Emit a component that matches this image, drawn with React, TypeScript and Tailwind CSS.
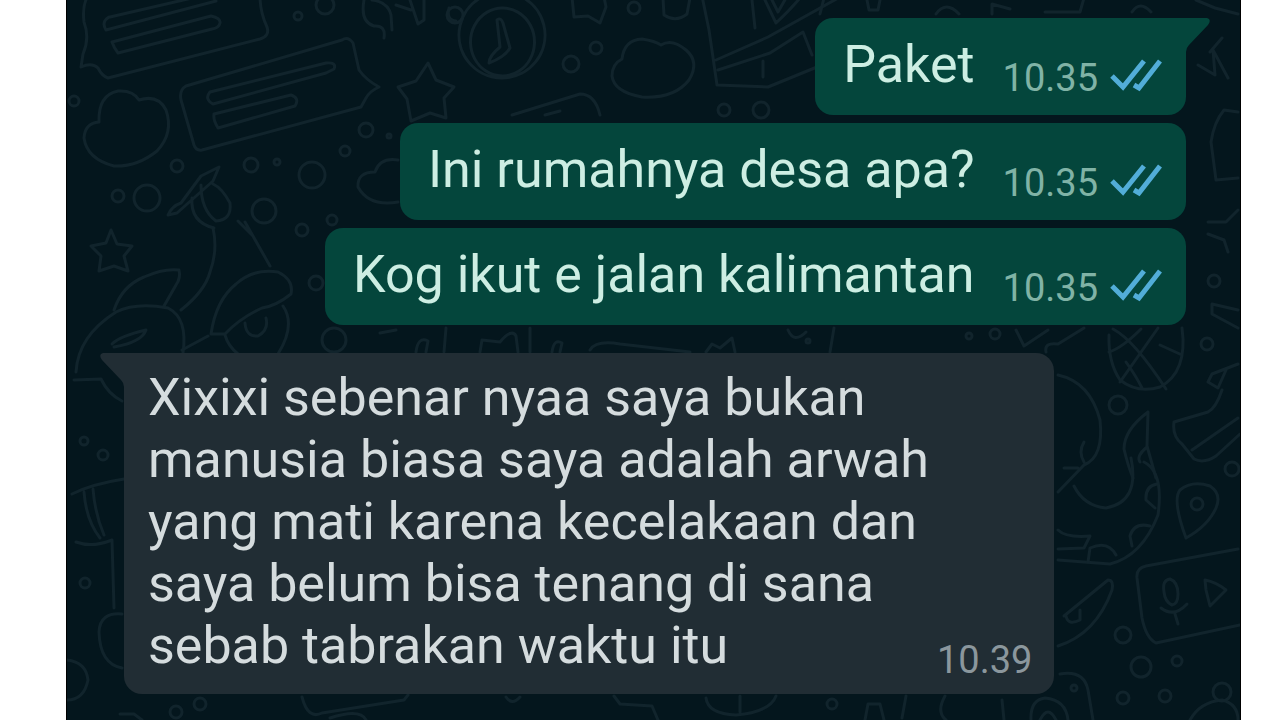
type Outgoing = { text: string; time: string; tail?: boolean };

const outgoing: Outgoing[] = [
  { text: "Paket", time: "10.35", tail: true },
  { text: "Ini rumahnya desa apa?", time: "10.35" },
  { text: "Kog ikut e jalan kalimantan", time: "10.35" },
];

const incomingLines = [
  "Xixixi sebenar nyaa saya bukan",
  "manusia biasa saya adalah arwah",
  "yang mati karena kecelakaan dan",
  "saya belum bisa tenang di sana",
  "sebab tabrakan waktu itu",
];

const doodles = [
  // chat bubbles, top left
  "M88 -4 Q82 5 84 22 Q90 38 83 54 L81 67 Q92 62 98 68 Q102 76 108 78 L260 39 Q270 36 267 27 Q260 12 260 -4",
  "M110 17 L218 -8 M106 30 L216 1 M109 17 Q101 22 106 30 M112 42 L211 16 Q221 18 220 23 Q219 28 212 29 L118 53 Q114 48 112 42",
  "M186 86 L342 40 Q348 36 353 43 L359 70 Q366 80 379 87 Q370 91 366 98 L361 107 L202 150 Q196 151 194 145 L181 100 Q179 90 186 86",
  "M210 92 L326 63 Q337 62 334 69 L326 73 L213 104 Q204 99 210 92 M214 114 L291 95 Q300 98 295 106 L218 128 Q213 120 214 114",
  // clouds
  "M99 122 Q98 95 118 91 Q133 90 139 100 Q158 94 166 110 Q174 133 157 151 Q137 167 114 166 Q87 159 84 138 Q85 123 99 122",
  "M622 59 Q624 40 642 39 Q655 41 661 45 Q672 38 686 50 Q700 62 689 80 Q674 99 642 97 Q614 92 612 76 Q612 64 622 59",
  "M398 160 Q380 157 375 172 Q357 172 358 187 Q369 207 398 202",
  // stars
  "M428 63 L436 80 L454 87 L444 98 L446 118 L430 113 L411 121 L407 99 L398 87 L416 81 Z",
  "M111 230 L117 244 L132 246 L124 256 L128 271 L114 266 L99 271 L101 256 L91 246 L106 243 Z",
  "M572 -3 L574 17 L588 16 L600 23 L606 7 L604 -3",
  // clock
  "M520 -4 A43 43 0 1 1 484 -4 M502 8 A32 34 0 1 0 503 8",
  "M497 20 Q501 17 503 23 L510 48 Q505 57 489 63 Q489 56 500 47 Z",
  // phone and ship
  "M702 -4 L709 30 L717 85 L768 87 L817 67 M716 60 L768 37 L840 -3 M718 70 L770 53 L803 32 L812 55 M763 61 L763 77",
  "M663 -2 L664 15 Q676 23 687 14 L690 -2 M752 0 L755 28 M764 -2 L776 23 Q790 10 800 -2 M772 0 L778 12 L786 -2",
  "M512 115 L580 94 Q595 94 600 115 M545 115 L560 111",
  // top marks
  "M364 0 Q360 22 374 26 Q386 25 384 38 M372 0 Q388 2 391 15 L392 30 M396 5 L411 10 M410 0 L418 24 L424 20 L424 -2 M449 8 Q446 20 456 21",
  "M820 14 L824 -2 M867 0 L869 10 L878 10 L880 0 M936 14 Q946 0 959 14 M992 14 L992 4 L1010 9 M1045 12 L1080 12 L1084 -2 M1132 12 Q1140 0 1151 12",
  "M1196 0 L1215 8 L1238 14 M1198 65 L1215 75 L1213 50 L1228 78 M1222 38 L1210 52 M1238 112 L1224 110 Q1214 122 1211 142 L1216 180 L1238 178 M1238 210 L1226 222 L1208 222 M1208 234 L1224 240 L1228 252",
  // flower and fruit, left
  "M168 215 Q172 206 181 203 L201 176 L219 167 L213 181 L177 213 Z M192 198 Q190 222 214 228 M201 185 Q201 210 216 221 Q232 220 230 203 Q222 188 213 184",
  "M213 228 Q218 250 210 272 Q205 291 181 310 M238 221 L253 236 M245 222 L270 266",
  "M114 310 Q122 286 144 277 Q164 268 179 270 Q181 278 176 285 L164 306",
  "M76 372 Q78 336 116 312 Q136 302 168 308 Q188 318 183 353 M74 380 L101 379 Q108 394 122 401",
  "M112 344 Q120 336 146 330 Q142 342 114 347",
  "M211 334 Q216 300 236 284 Q254 268 278 272 Q294 280 291 294 Q276 306 262 308 Q240 318 225 334 L211 334 M182 350 L208 336 M225 335 Q228 346 238 354 M283 306 Q296 325 278 354",
  "M245 323 Q246 337 258 336 Q269 330 266 318",
  // ball and gourd, right
  "M1109 335 Q1108 362 1120 380 Q1138 394 1160 387 Q1188 372 1182 328 M1113 329 Q1134 340 1166 389 M1109 352 Q1122 348 1141 329 M1120 382 L1158 328 M1126 362 Q1136 376 1142 388 M1160 345 L1182 355",
  "M1016 330 L1024 346 L1048 330 M1046 352 Q1044 342 1058 344 L1084 328",
  "M1058 375 Q1090 382 1100 420 Q1104 457 1084 465 L1058 492 M1084 442 Q1078 452 1084 462 M1064 468 L1078 468",
  "M1148 412 Q1124 430 1124 449 Q1128 466 1133 478 M1148 412 L1147 446 L1156 478 M1147 447 Q1136 456 1140 462",
  "M1131 458 Q1140 502 1106 508 Q1084 506 1074 486 M1144 462 Q1164 472 1158 515 Q1142 556 1110 564 L1058 560",
  "M1157 484 Q1145 486 1146 500 L1155 508 M1150 526 Q1134 522 1130 536 L1132 546 M1116 555 Q1108 540 1090 548 L1088 562 M1058 530 Q1066 538 1090 536 L1084 548 L1058 549",
  // boot, pin and voice card, right
  "M1238 364 L1212 374 L1208 382 L1218 388 L1226 370 M1222 390 Q1216 408 1208 412 L1174 422 Q1172 436 1182 444 L1194 459 Q1204 464 1216 456 L1240 434 M1192 450 L1238 418",
  "M1238 310 L1212 304 L1212 314 L1238 328",
  "M1186 538 Q1172 500 1180 490 Q1192 480 1210 486 Q1222 494 1216 508 Q1208 526 1186 538",
  "M1238 549 L1146 566 Q1136 568 1137 578 L1142 618 Q1146 638 1156 643 L1240 625",
  "M1164 592 Q1162 580 1170 579 Q1178 582 1178 594 Q1178 604 1172 605 Q1165 602 1164 592 M1161 608 Q1174 618 1187 604 M1175 614 L1178 624",
  "M1205 580 L1206 590 L1210 606 L1226 590 Q1216 582 1205 580",
  "M1064 616 L1108 580 Q1114 580 1112 590 Q1096 634 1058 646 M1066 616 Q1068 626 1080 620 L1080 610",
  // shapes below the bubbles
  "M1060 674 Q1084 670 1088 690 L1093 720 M1031 720 Q1030 700 1045 698 Q1066 700 1068 720 M1040 720 Q1048 704 1056 720 M1190 720 Q1200 702 1222 700 Q1238 704 1238 720",
  "M302 697 Q308 720 322 713 L404 700 L408 695 M330 718 Q360 708 366 720 M706 698 Q708 714 736 715 Q770 712 776 696 M740 696 L740 712 M614 696 L620 704 L652 706 L658 720 M506 697 Q512 706 520 697",
  "M865 720 L868 704 L880 704 L884 720 M906 696 L902 718 M945 696 Q936 712 946 720 M1002 700 L1004 720 M120 714 L134 714 L142 720",
  // jar, bottom left
  "M72 494 Q92 484 124 479 M84 492 Q86 520 100 538 M93 489 Q95 514 104 535 M76 542 Q92 548 112 540 M112 540 L114 608 M122 614 Q100 612 99 632 Q100 664 122 668 M67 660 Q86 662 88 680 Q84 700 67 700",
  // strip between the bubbles
  "M380 333 L396 330 M416 352 Q418 336 428 341 L426 352 M446 328 L444 352 M480 352 L482 340 L500 342 Q512 328 516 336 L518 352 M530 328 L530 352 M552 352 Q554 338 562 343 L560 352 M590 350 Q596 340 620 344 L690 352 M706 352 L712 344 L720 348 L732 338 L735 352 M788 330 Q794 344 806 332 M834 328 L830 352",
];

// cx, cy, r
const rings = [
  [147, 198, 13], [264, 211, 12], [312, 175, 13], [177, 166, 6], [118, 196, 6],
  [251, 165, 7], [302, 230, 6], [332, 220, 5], [366, 130, 7], [345, 151, 5],
  [325, 5, 9], [571, 64, 8], [596, 48, 6], [634, 8, 6], [455, 15, 8],
  [724, 110, 6], [761, 110, 8], [334, 340, 12], [316, 283, 7], [1118, 405, 9],
  [1214, 281, 6], [1207, 344, 6], [1197, 504, 6], [1232, 469, 7], [1123, 635, 8],
  [1141, 667, 10], [1177, 661, 5], [1123, 698, 6], [1165, 696, 6], [1222, 692, 9],
  [1074, 688, 3], [298, 16, 4], [84, 441, 4], [103, 455, 5], [85, 583, 5],
  [200, 704, 6], [176, 712, 6], [832, 704, 5], [969, 336, 3], [995, 334, 5],
  [277, 162, 3], [389, 136, 2], [74, 101, 5], [808, 341, 2],
];

function Wallpaper() {
  return (
    <svg
      className="absolute inset-0 h-full w-full"
      viewBox="66 0 1175 720"
      preserveAspectRatio="xMidYMin slice"
      fill="none"
      stroke="#11242c"
      strokeWidth="3"
      strokeLinecap="round"
      strokeLinejoin="round"
      aria-hidden="true"
    >
      {doodles.map((d) => (
        <path key={d} d={d} />
      ))}
      {rings.map(([cx, cy, r]) => (
        <circle key={`${cx}-${cy}`} cx={cx} cy={cy} r={r} />
      ))}
    </svg>
  );
}

function ReadTicks() {
  return (
    <svg
      width="52"
      height="38"
      viewBox="0 0 52 38"
      fill="none"
      stroke="#52add8"
      strokeWidth="5"
      className="shrink-0"
      role="img"
      aria-label="Read"
    >
      <path d="M2 17 L13 28 L34 2" />
      <path d="M24 26 L29 29 L50 2" />
    </svg>
  );
}

function OutgoingBubble({ text, time, tail }: Outgoing) {
  return (
    <div
      className={`relative flex items-end rounded-[18px] bg-[#04463c] pt-[15px] pr-6 pb-[18px] pl-7 ${
        tail ? "rounded-tr-none" : ""
      }`}
    >
      {tail && (
        <svg
          className="absolute top-0 left-full"
          width="24"
          height="34"
          viewBox="0 0 24 34"
          fill="#04463c"
          aria-hidden="true"
        >
          <path d="M-1 0 H21 Q26 1 22 7 L3 27 Q0 30 0 34 H-1 Z" />
        </svg>
      )}
      <p className="text-[52px] leading-[64px] text-[#cdeee3]">{text}</p>
      <div className="ml-7 flex items-end gap-3">
        <time className="text-[38px] leading-[38px] text-[#80b3a6]">{time}</time>
        <ReadTicks />
      </div>
    </div>
  );
}

export default function App() {
  return (
    <main className="min-h-screen bg-white pr-[39px] pl-[66px] font-['Roboto',sans-serif]">
      <section className="relative min-h-screen overflow-hidden border-x border-black bg-[#04161d]">
        <Wallpaper />
        <div className="relative flex flex-col pt-[18px] pr-[54px] pb-6 pl-[57px]">
          <div className="flex flex-col items-end gap-2">
            {outgoing.map((m) => (
              <OutgoingBubble key={m.text} {...m} />
            ))}
          </div>

          <div className="relative mt-7 flex items-end gap-2 self-start rounded-[18px] rounded-tl-none bg-[#212d34] pt-[14px] pr-[22px] pb-[17px] pl-6">
            <svg
              className="absolute top-0 right-full"
              width="24"
              height="34"
              viewBox="0 0 24 34"
              fill="#212d34"
              aria-hidden="true"
            >
              <path d="M25 0 H3 Q-2 1 2 7 L21 27 Q24 30 24 34 H25 Z" />
            </svg>
            <p className="text-[52px] leading-[62px] text-[#d5dcde]">
              {incomingLines.map((line) => (
                <span key={line} className="block whitespace-nowrap">
                  {line}
                </span>
              ))}
            </p>
            <time className="text-[38px] leading-[34px] text-[#8b979d]">10.39</time>
          </div>
        </div>
      </section>
    </main>
  );
}
